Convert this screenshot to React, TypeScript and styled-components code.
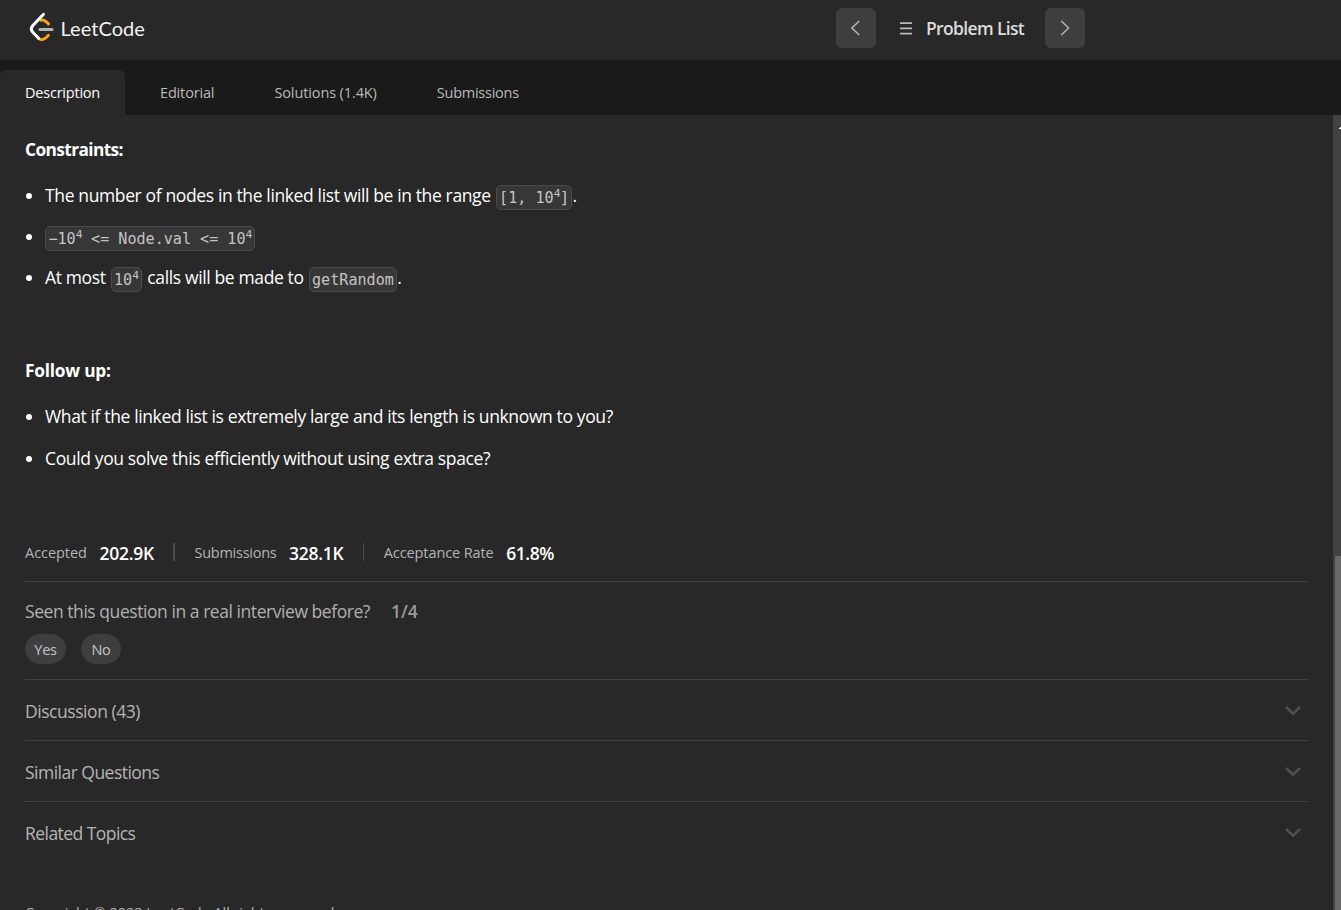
import React from 'react';
import styled, { createGlobalStyle } from 'styled-components';

const GlobalStyle = createGlobalStyle`
  * { box-sizing: border-box; }
  html, body { margin: 0; background: #282828; overflow: hidden; }
  body { font-family: "Open Sans", "Noto Sans", sans-serif; color: #fff; }
  p, ul { margin: 0; padding: 0; }
  button { font: inherit; border: 0; padding: 0; }
`;

const Page = styled.div`
  height: 910px;
  display: flex;
  flex-direction: column;
  overflow: hidden;
  background: #282828;
`;

const Header = styled.header`
  flex: none;
  height: 60px;
  padding: 0 256px 4px 28px;
  display: flex;
  align-items: center;
  justify-content: space-between;
`;

const Brand = styled.div`
  display: flex;
  align-items: center;
  gap: 4.5px;
  padding-bottom: 2px;
`;

const BrandName = styled.span`
  padding-top: 1px;
  font: 400 20px/24px Lato, sans-serif;
  letter-spacing: 0.05px;
  color: #f2f2f2;
`;

const ProblemNav = styled.nav`
  display: flex;
  align-items: center;
`;

const NavButton = styled.button`
  width: 40px;
  height: 40px;
  border-radius: 6px;
  background: #3e3e3e;
  display: flex;
  align-items: center;
  justify-content: center;
`;

const ListLink = styled.div`
  display: flex;
  align-items: center;
  gap: 14px;
  width: 169px;
  padding-left: 24px;
  padding-top: 1px;
`;

const ListTitle = styled.span`
  padding-bottom: 2px;
  font-size: 17.5px;
  line-height: 24px;
  font-weight: 600;
  letter-spacing: -0.65px;
  white-space: nowrap;
  color: #dcdcdc;
`;

const Tabs = styled.div`
  flex: none;
  display: flex;
  gap: 10px;
  height: 55px;
  padding-top: 10px;
  background: #1a1a1a;
`;

const Tab = styled.div<{ $active?: boolean; $track?: number }>`
  display: flex;
  align-items: center;
  padding: 0 25px;
  border-radius: 6px 6px 0 0;
  font-size: 14.5px;
  letter-spacing: ${(p) => p.$track ?? 0}px;
  white-space: nowrap;
  background: ${(p) => (p.$active ? '#282828' : 'transparent')};
  color: ${(p) => (p.$active ? '#fff' : '#b9b9b9')};
`;

const Body = styled.div`
  flex: 1;
  min-height: 0;
  display: flex;
`;

const Content = styled.main`
  flex: 1;
  min-width: 0;
  padding: 21px 25px 0;
  overflow: hidden;
`;

const Heading = styled.p<{ $track: number }>`
  font-size: 17.3px;
  line-height: 27px;
  font-weight: 700;
  letter-spacing: ${(p) => p.$track}px;
`;

const List = styled.ul<{ $gap: number; $after: number }>`
  list-style: none;
  display: flex;
  flex-direction: column;
  gap: ${(p) => p.$gap}px;
  padding-top: 19px;
  margin-bottom: ${(p) => p.$after}px;
`;

const Item = styled.li`
  display: flex;
  align-items: center;
  height: 27px;
  font-size: 17.5px;
  line-height: 27px;
  letter-spacing: -0.37px;
  white-space: nowrap;

  &::before {
    content: '';
    width: 6px;
    height: 6px;
    margin: 1px 13px 0 1px;
    border-radius: 50%;
    background: #fff;
  }
`;

const Code = styled.code<{ $lead?: boolean }>`
  display: block;
  height: 25px;
  margin: 4px 0 0 ${(p) => (p.$lead ? 0 : 5)}px;
  padding: 0 2.4px;
  border: 1px solid #4b4b4b;
  border-radius: 5px;
  background: #373737;
  color: #c4c4c4;
  font: 15.1px/24px "DejaVu Sans Mono", monospace;
  letter-spacing: 0;
  white-space: pre;

  sup {
    position: relative;
    top: -6px;
    vertical-align: baseline;
    font-size: 11.3px;
    line-height: 0;
    letter-spacing: -0.5px;
  }
`;

const After = styled.span`
  margin-left: 5.5px;
`;

const Stats = styled.div`
  display: flex;
  align-items: center;
  height: 58px;
  border-bottom: 1px solid #424242;
`;

const StatLabel = styled.span<{ $track: number }>`
  font-size: 14.5px;
  letter-spacing: ${(p) => p.$track}px;
  white-space: nowrap;
  color: #b4b4b4;
`;

const StatValue = styled.span<{ $track?: number }>`
  margin-left: 12.5px;
  padding-top: 1px;
  font-size: 17.5px;
  font-weight: 600;
  letter-spacing: ${(p) => p.$track ?? -0.25}px;
`;

const Separator = styled.span<{ $thick?: boolean }>`
  width: ${(p) => (p.$thick ? 2 : 1)}px;
  height: 18px;
  margin: 0 ${(p) => (p.$thick ? 19.5 : 20.3)}px 1px 19px;
  background: #4a4a4a;
`;

const Interview = styled.section`
  height: 98px;
  padding-top: 16px;
  border-bottom: 1px solid #424242;
`;

const Question = styled.p`
  display: flex;
  gap: 21px;
  font-size: 17.5px;
  line-height: 27px;
  letter-spacing: -0.445px;
  color: #b0b0b0;
`;

const Step = styled.span`
  font-weight: 600;
  letter-spacing: 0;
  color: #9a9a9a;
`;

const Answers = styled.div`
  display: flex;
  gap: 15px;
  margin-top: 9px;
`;

const Pill = styled.button<{ $width: number }>`
  width: ${(p) => p.$width}px;
  height: 30px;
  padding-top: 1px;
  border-radius: 15px;
  background: #3e3e3e;
  color: #c4c4c4;
  font-size: 14.5px;
  letter-spacing: -0.2px;
`;

const Accordion = styled.div<{ $last?: boolean }>`
  display: flex;
  align-items: center;
  justify-content: space-between;
  height: 61px;
  padding: 2px 7px 0 0;
  border-bottom: 1px solid ${(p) => (p.$last ? 'transparent' : '#424242')};
`;

const AccordionTitle = styled.span<{ $track: number }>`
  padding-top: 1px;
  font-size: 17.5px;
  line-height: 24px;
  letter-spacing: ${(p) => p.$track}px;
  color: #b4b4b4;
`;

const Copyright = styled.p`
  margin-top: 39.5px;
  font-size: 14.5px;
  line-height: 21px;
  letter-spacing: -0.05px;
  white-space: nowrap;
  color: #b4b4b4;
`;

const ScrollTrack = styled.div`
  flex: none;
  width: 8px;
  display: flex;
  flex-direction: column;
  align-items: flex-end;
  justify-content: space-between;
  padding-top: 12px;
  background: #424242;
`;

const ScrollThumb = styled.div`
  width: 6px;
  height: 354px;
  background: #686868;
`;

function Logo() {
  return (
    <svg width="28" height="30" viewBox="28 12 28 30" fill="none" strokeLinecap="round" strokeWidth="3">
      <path d="M41 20.2 C43.8 19.2 45.6 20.6 48.6 24" stroke="#ffa116" />
      <path d="M38.5 38.3 C41.5 40.7 44.2 40.2 48.3 35.4" stroke="#ffa116" />
      <path d="M40 29.5 H52" stroke="#b3b3b3" />
      <path d="M43.5 14.3 L32.4 26 Q30.1 28.9 32.4 31.8 L38.6 38.3" stroke="#fff" />
    </svg>
  );
}

function Arrow({ right }: { right?: boolean }) {
  return (
    <svg width="16" height="16" viewBox="0 0 16 16" fill="none" stroke="#b4b4b4" strokeWidth="1.5">
      <path d={right ? 'M4.3 1 L11.6 8 L4.3 15' : 'M11.2 1 L3.9 8 L11.2 15'} />
    </svg>
  );
}

function MenuIcon() {
  return (
    <svg width="12" height="14" viewBox="0 0 12 14" stroke="#b8b8b8" strokeWidth="1.7">
      <path d="M0 1.2 H12 M0 6.4 H12 M0 11.6 H12" />
    </svg>
  );
}

function Chevron() {
  return (
    <svg width="16" height="12" viewBox="0 0 16 12" fill="none" stroke="#505050" strokeWidth="2.5">
      <path d="M1 2 L8 8.7 L15 2" />
    </svg>
  );
}

function ScrollUp() {
  return (
    <svg width="2" height="2" viewBox="0 0 2 2" fill="#fff" shapeRendering="crispEdges">
      <path d="M1 0 H2 V2 H0 V1 H1 Z" />
    </svg>
  );
}

export default function App() {
  return (
    <Page>
      <GlobalStyle />
      <Header>
        <Brand>
          <Logo />
          <BrandName>LeetCode</BrandName>
        </Brand>
        <ProblemNav>
          <NavButton><Arrow /></NavButton>
          <ListLink>
            <MenuIcon />
            <ListTitle>Problem List</ListTitle>
          </ListLink>
          <NavButton><Arrow right /></NavButton>
        </ProblemNav>
      </Header>
      <Tabs>
        <Tab $active $track={-0.22}>Description</Tab>
        <Tab $track={-0.16}>Editorial</Tab>
        <Tab $track={-0.11}>Solutions (1.4K)</Tab>
        <Tab $track={-0.25}>Submissions</Tab>
      </Tabs>
      <Body>
        <Content>
          <Heading $track={-0.6}>Constraints:</Heading>
          <List $gap={14.2} $after={65.6}>
            <Item>
              <span>The number of nodes in the linked list will be in the range</span>
              <Code>[1, 10<sup>4</sup>]</Code>
              <span>.</span>
            </Item>
            <Item>
              <Code $lead>−10<sup>4</sup>{' <= Node.val <= 10'}<sup>4</sup></Code>
            </Item>
            <Item>
              <span>At most</span>
              <Code>10<sup>4</sup></Code>
              <After>calls will be made to</After>
              <Code>getRandom</Code>
              <span>.</span>
            </Item>
          </List>
          <Heading $track={-0.22}>Follow up:</Heading>
          <List $gap={15} $after={52}>
            <Item>What if the linked list is extremely large and its length is unknown to you?</Item>
            <Item>Could you solve this efficiently without using extra space?</Item>
          </List>
          <Stats>
            <StatLabel $track={-0.04}>Accepted</StatLabel>
            <StatValue>202.9K</StatValue>
            <Separator $thick />
            <StatLabel $track={-0.25}>Submissions</StatLabel>
            <StatValue>328.1K</StatValue>
            <Separator />
            <StatLabel $track={-0.1}>Acceptance Rate</StatLabel>
            <StatValue $track={-0.45}>61.8%</StatValue>
          </Stats>
          <Interview>
            <Question>
              Seen this question in a real interview before?
              <Step>1/4</Step>
            </Question>
            <Answers>
              <Pill $width={41}>Yes</Pill>
              <Pill $width={40}>No</Pill>
            </Answers>
          </Interview>
          <Accordion>
            <AccordionTitle $track={-0.45}>Discussion (43)</AccordionTitle>
            <Chevron />
          </Accordion>
          <Accordion>
            <AccordionTitle $track={-0.52}>Similar Questions</AccordionTitle>
            <Chevron />
          </Accordion>
          <Accordion $last>
            <AccordionTitle $track={-0.55}>Related Topics</AccordionTitle>
            <Chevron />
          </Accordion>
          <Copyright>Copyright © 2023 LeetCode All rights reserved</Copyright>
        </Content>
        <ScrollTrack>
          <ScrollUp />
          <ScrollThumb />
        </ScrollTrack>
      </Body>
    </Page>
  );
}
